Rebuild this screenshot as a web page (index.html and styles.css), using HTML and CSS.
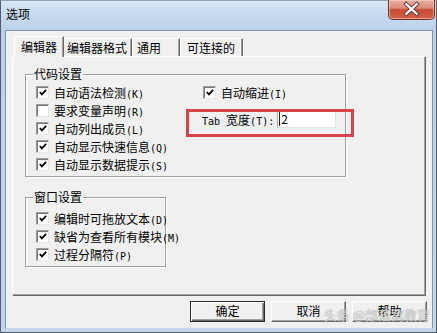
FILE: index.html
```html
<!DOCTYPE html>
<html lang="zh-CN">
<head>
<meta charset="utf-8">
<title>选项</title>
<link rel="stylesheet" href="styles.css">
</head>
<body>
<div class="win">
  <div class="titlebar">
    <span class="title">选项</span>
    <div class="close">
      <svg width="47" height="20" viewBox="0 0 47 20">
        <path d="M18 5 L29 15 M29 5 L18 15" stroke="#5a2a22" stroke-width="4.2" stroke-linecap="square"/>
        <path d="M18 5 L29 15 M29 5 L18 15" stroke="#ffffff" stroke-width="2.4" stroke-linecap="square"/>
      </svg>
    </div>
  </div>
  <div class="frame">
    <div class="body">
      <div class="tabs">
        <div class="tab active">编辑器</div>
        <div class="tab">编辑器格式</div>
        <div class="tab tab-wide">通用</div>
        <div class="tab tab-mid">可连接的</div>
      </div>
      <div class="panel">
        <div class="group g1">
          <span class="legend">代码设置</span>
          <div class="cols">
            <div class="col">
              <div class="row"><span class="cb"><svg width="11" height="11" viewBox="0 0 11 11"><polyline points="2,5 4.3,7.6 9,2.6" fill="none" stroke="#000" stroke-width="1.9"/></svg></span><span>自动语法检测<span class="k">(K)</span></span></div>
              <div class="row"><span class="cb"></span><span>要求变量声明<span class="k">(R)</span></span></div>
              <div class="row"><span class="cb"><svg width="11" height="11" viewBox="0 0 11 11"><polyline points="2,5 4.3,7.6 9,2.6" fill="none" stroke="#000" stroke-width="1.9"/></svg></span><span>自动列出成员<span class="k">(L)</span></span></div>
              <div class="row"><span class="cb"><svg width="11" height="11" viewBox="0 0 11 11"><polyline points="2,5 4.3,7.6 9,2.6" fill="none" stroke="#000" stroke-width="1.9"/></svg></span><span>自动显示快速信息<span class="k">(Q)</span></span></div>
              <div class="row"><span class="cb"><svg width="11" height="11" viewBox="0 0 11 11"><polyline points="2,5 4.3,7.6 9,2.6" fill="none" stroke="#000" stroke-width="1.9"/></svg></span><span>自动显示数据提示<span class="k">(S)</span></span></div>
            </div>
            <div class="col col-right">
              <div class="row"><span class="cb"><svg width="11" height="11" viewBox="0 0 11 11"><polyline points="2,5 4.3,7.6 9,2.6" fill="none" stroke="#000" stroke-width="1.9"/></svg></span><span>自动缩进<span class="k">(I)</span></span></div>
              <div class="tabwidth">
                <span><span class="k">Tab </span>宽度<span class="k">(T):</span></span>
                <span class="input"><span class="caret"></span>2</span>
              </div>
              <div class="highlight"></div>
            </div>
          </div>
        </div>
        <div class="group g2">
          <span class="legend">窗口设置</span>
          <div class="row"><span class="cb"><svg width="11" height="11" viewBox="0 0 11 11"><polyline points="2,5 4.3,7.6 9,2.6" fill="none" stroke="#000" stroke-width="1.9"/></svg></span><span>编辑时可拖放文本<span class="k">(D)</span></span></div>
          <div class="row"><span class="cb"><svg width="11" height="11" viewBox="0 0 11 11"><polyline points="2,5 4.3,7.6 9,2.6" fill="none" stroke="#000" stroke-width="1.9"/></svg></span><span>缺省为查看所有模块<span class="k">(M)</span></span></div>
          <div class="row"><span class="cb"><svg width="11" height="11" viewBox="0 0 11 11"><polyline points="2,5 4.3,7.6 9,2.6" fill="none" stroke="#000" stroke-width="1.9"/></svg></span><span>过程分隔符<span class="k">(P)</span></span></div>
        </div>
      </div>
      <div class="buttons">
        <div class="btn default">确定</div>
        <div class="btn">取消</div>
        <div class="btn">帮助</div>
      </div>
    </div>
  </div>
  <div class="watermark">头条 @部落窝教育</div>
</div>
</body>
</html>
```

FILE: styles.css
```css
* { box-sizing: border-box; }
html, body { margin: 0; padding: 0; }
body {
  width: 437px;
  height: 333px;
  overflow: hidden;
  font-family: "Noto Sans CJK SC", "Noto Sans", sans-serif;
  font-size: 12px;
  color: #000;
}
.win {
  position: relative;
  width: 437px;
  height: 333px;
  display: flex;
  flex-direction: column;
  background: linear-gradient(180deg, #d9e6f4 0px, #c6d9ee 14px, #bcd1e9 30px, #c2d5ea 100%);
  border: 1px solid #4f5d6d;
  border-top-color: #8fa4ba;
}
.titlebar {
  height: 29px;
  display: flex;
  align-items: flex-start;
  padding-left: 5px;
  flex: none;
}
.title {
  line-height: 14px;
  margin-top: 6px;
}
.close {
  margin-left: auto;
  margin-right: 1px;
  margin-top: -1px;
  width: 47px;
  height: 20px;
  border: 1px solid #7a3026;
  border-top: none;
  border-radius: 0 0 5px 5px;
  background: linear-gradient(180deg, #eab0a2 0%, #dc8a76 42%, #c84a36 52%, #d5624a 100%);
  box-shadow: inset 0 0 0 1px rgba(255, 215, 205, 0.5);
  display: flex;
}
.close svg { display: block; margin-top: -1px; }
.frame {
  flex: 1;
  display: flex;
  padding: 0 3px 3px 4px;
}
.body {
  flex: 1;
  display: flex;
  flex-direction: column;
  background: #f0f0f0;
  border: 1px solid #8196ad;
  border-bottom-color: #c9d8ea;
}
.tabs {
  display: flex;
  align-items: flex-end;
  height: 20px;
  margin-top: 5px;
  padding-left: 10px;
  flex: none;
}
.tab {
  height: 18px;
  line-height: 17px;
  padding: 0 4px;
  border-left: 1px solid #fff;
  border-top: 1px solid #fff;
  border-right: 1px solid #696969;
  box-shadow: inset -1px 0 0 #a0a0a0;
  background: #f0f0f0;
  white-space: nowrap;
}
.tab.active {
  position: relative;
  z-index: 1;
  height: 21px;
  line-height: 19px;
  margin: 0 -2px -1px -2px;
  padding: 0 6px;
}
.tab-wide { padding-right: 18px; }
.tab-mid { padding-left: 6px; padding-right: 7px; }
.panel {
  flex: none;
  height: 239px;
  margin: 0 7px 0 6px;
  padding: 17px 0 0 12px;
  border-left: 1px solid #fff;
  border-top: 1px solid #fff;
  border-right: 1px solid #a0a0a0;
  border-bottom: 1px solid #a0a0a0;
  box-shadow: 1px 1px 0 #696969;
}
.group {
  position: relative;
  border: 1px solid #a0a0a0;
  box-shadow: inset 1px 1px 0 #fff, 1px 1px 0 #fff;
}
.legend {
  position: absolute;
  left: 7px;
  top: -8px;
  padding: 0 1px;
  line-height: 14px;
  background: #f0f0f0;
}
.g1 {
  width: 321px;
  height: 103px;
  padding: 8px 0 0 10px;
}
.g2 {
  width: 141px;
  height: 70px;
  margin-top: 20px;
  padding: 11px 0 0 10px;
}
.cols {
  display: grid;
  grid-template-columns: 167px 1fr;
}
.col-right { position: relative; }
.row {
  display: flex;
  align-items: center;
  gap: 5px;
  height: 18px;
  white-space: nowrap;
}
.cb {
  flex: none;
  width: 13px;
  height: 13px;
  border: 1px solid;
  border-color: #9a9a9a #e6e6e6 #e6e6e6 #9a9a9a;
  box-shadow: inset 1px 1px 0 #7a7a7a;
  background: #fff;
  display: flex;
  align-items: center;
  justify-content: center;
}
.cb svg { display: block; margin: 1px 0 0 1px; }
.k {
  font-family: "DejaVu Sans Mono", "Liberation Mono", monospace;
  font-size: 10px;
}
.tabwidth {
  display: flex;
  align-items: center;
  gap: 3px;
  height: 18px;
  margin-top: 9px;
  margin-left: -1px;
  white-space: nowrap;
}
.input {
  width: 59px;
  height: 18px;
  display: flex;
  align-items: center;
  gap: 1px;
  padding-left: 1px;
  background: #fff;
  border: 1px solid;
  border-color: #a9a9a9 #e3e3e3 #e3e3e3 #a9a9a9;
  line-height: 14px;
}
.caret {
  width: 1px;
  height: 14px;
  background: #222;
}
.highlight {
  position: absolute;
  left: -17px;
  top: 26px;
  width: 168px;
  height: 28px;
  border: 3px solid #d8424a;
}
.buttons {
  display: flex;
  justify-content: flex-end;
  gap: 6px;
  margin-top: 6px;
  padding-right: 5px;
}
.btn {
  width: 75px;
  height: 21px;
  line-height: 18px;
  text-align: center;
  background: #f0f0f0;
  border: 1px solid;
  border-color: #fff #696969 #696969 #fff;
  box-shadow: inset -1px -1px 0 #a0a0a0;
}
.btn.default {
  border-color: #2a2a2a;
  box-shadow: inset 1px 1px 0 #fff, inset -1px -1px 0 #696969, inset -2px -2px 0 #a0a0a0;
}
.watermark {
  position: absolute;
  right: 6px;
  bottom: 10px;
  font-size: 13px;
  line-height: 14px;
  color: rgba(255, 255, 255, 0.7);
  text-shadow: 0 0 1px rgba(70, 70, 70, 0.75);
  white-space: nowrap;
}
```
